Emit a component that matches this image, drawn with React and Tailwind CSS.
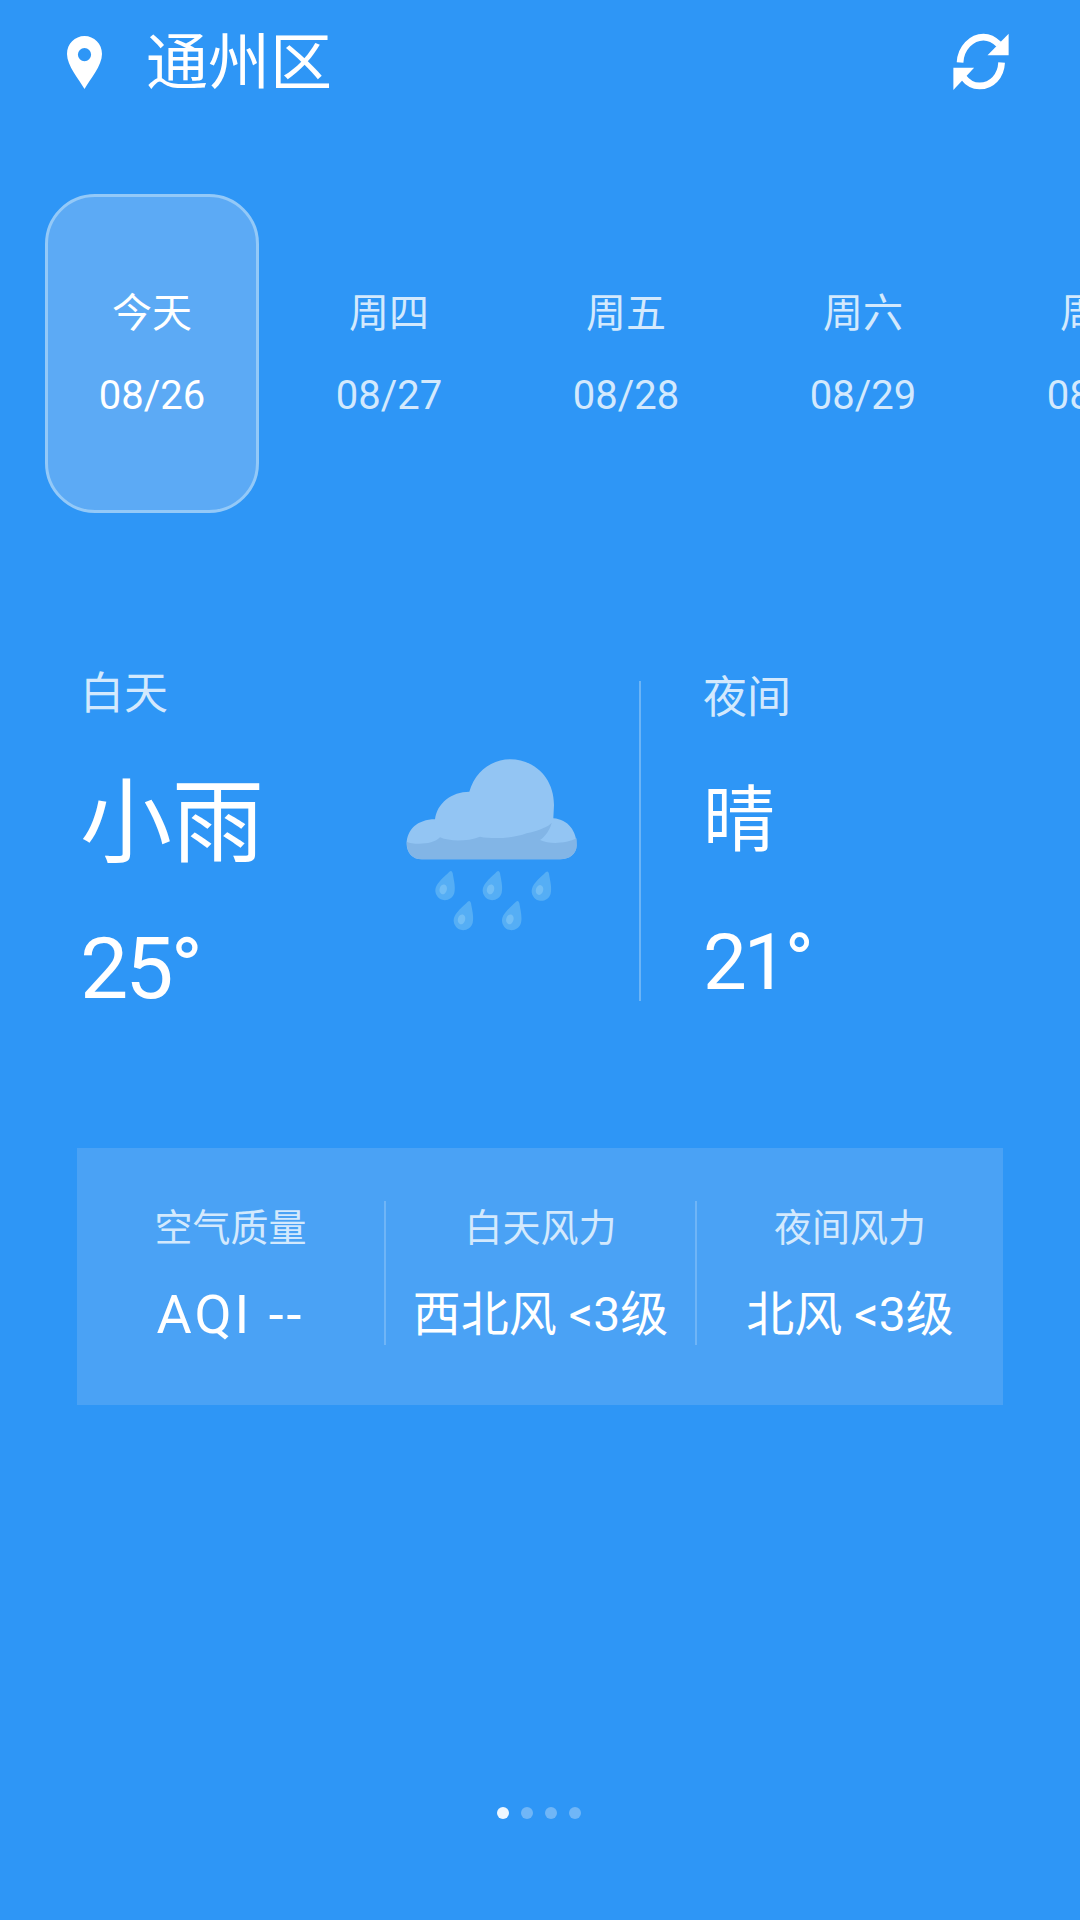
const font = "font-['Roboto','Noto_Sans_CJK_SC',sans-serif]";

const days = [
  { name: "今天", date: "08/26", active: true },
  { name: "周四", date: "08/27" },
  { name: "周五", date: "08/28" },
  { name: "周六", date: "08/29" },
  { name: "周日", date: "08/30" },
];

const stats = [
  { label: "空气质量", value: "AQI --", box: "w-[307px]", size: "text-[54px] tracking-[3px]" },
  { label: "白天风力", value: "西北风 <3级", box: "w-[311px] border-l-2 border-[#6fb5f7]", size: "text-[48px]" },
  { label: "夜间风力", value: "北风 <3级", box: "w-[308px] border-l-2 border-[#6fb5f7]", size: "text-[48px]" },
];

const drops = [
  [198, 470],
  [340, 470],
  [487, 472],
  [253, 560],
  [398, 560],
];

function Pin() {
  return (
    <svg width="35" height="53" viewBox="0 0 106 160" className="shrink-0">
      <path
        fillRule="evenodd"
        fill="#fff"
        d="M53 0 C82 0 106 24 106 54 C106 90 70 130 53 160 C36 130 0 90 0 54 C0 24 24 0 53 0 Z M53 36 A20 20 0 1 0 53 76 A20 20 0 1 0 53 36 Z"
      />
    </svg>
  );
}

function Refresh() {
  return (
    <svg width="62" height="62" viewBox="60 30 185 185" className="shrink-0">
      <path d="M90 124 C92 80 125 48 160 48 C178 48 192 56 206 70" fill="none" stroke="#fff" strokeWidth="20" />
      <path d="M235 38 L235 102 L172 102 Z" fill="#fff" />
      <path d="M214 124 C212 165 185 194 148 194 C128 194 112 184 100 168" fill="none" stroke="#fff" strokeWidth="20" />
      <path d="M70 140 L132 140 L70 206 Z" fill="#fff" />
    </svg>
  );
}

function RainCloud() {
  return (
    <svg width="240" height="220" viewBox="0 0 720 660" className="shrink-0">
      <path
        d="M125 388 C98 388 80 368 80 342 C80 300 112 268 165 268 C170 220 215 185 268 185 C285 125 335 88 390 88 C465 88 522 145 522 225 L520 265 C565 268 590 305 590 345 C590 372 568 388 540 388 Z"
        fill="#93c5f3"
      />
      <path
        d="M80 335 C100 345 160 345 180 322 C210 335 260 335 300 320 C340 328 400 325 440 310 C480 300 505 290 515 278 C510 300 495 320 480 330 C510 345 560 340 590 325 L590 345 C590 372 568 388 540 388 L125 388 C98 388 80 368 80 335 Z"
        fill="#82b5e6"
      />
      {drops.map(([x, y]) => (
        <g key={x} transform={`translate(${x} ${y}) rotate(15)`}>
          <path d="M-2 -46 C2 -52 6 -50 9 -44 C16 -28 29 -6 29 12 C29 28 15 41 0 41 C-15 41 -29 28 -29 12 C-29 -6 -12 -28 -2 -46 Z" fill="#55aef5" />
          <ellipse cx="-6" cy="10" rx="11" ry="15" fill="#72bef6" />
        </g>
      ))}
    </svg>
  );
}

export default function App() {
  return (
    <div className={`${font} w-[1080px] h-[1920px] bg-[#2e96f6] text-white flex flex-col overflow-hidden`}>

      {/* ================= HEADER ================= */}
      <div className="flex items-center justify-between h-[124px] pl-[67px] pr-[68px]">
        <div className="flex items-center gap-[44px]">
          <Pin />
          <span className="text-[62px] leading-none mt-[3px]">通州区</span>
        </div>
        <Refresh />
      </div>

      {/* ================= DAYS ================= */}
      <div className="flex gap-[23px] pl-[45px] mt-[70px]">
        {days.map((d) => (
          <div
            key={d.date}
            className={`w-[214px] h-[319px] shrink-0 rounded-[50px] flex flex-col items-center justify-center gap-[36px] ${
              d.active ? "bg-[#5caaf5] border-[3px] border-[#93c9f8] text-white" : "text-[#d3e9fd]"
            }`}
          >
            <span className="text-[40px] leading-[48px]">{d.name}</span>
            <span className="text-[40px] leading-[44px]">{d.date}</span>
          </div>
        ))}
      </div>

      {/* ================= DAY / NIGHT ================= */}
      <div className="flex mt-[168px] pl-[80px] h-[322px]">
        <div className="w-[559px] flex">
          <div className="flex flex-col w-[300px]">
            <span className="text-[44px] leading-[44px] text-[#d3e9fd] -mt-[9px]">白天</span>
            <span className="text-[92px] leading-[92px] mt-[62px]">小雨</span>
            <span className="text-[86px] leading-[90px] tracking-[-3px] mt-[54px]">25°</span>
          </div>
          <div className="pt-[49px]">
            <RainCloud />
          </div>
        </div>
        <div className="w-[2px] h-[320px] bg-[#6bb4f6]" />
        <div className="flex flex-col pl-[62px]">
          <span className="text-[44px] leading-[44px] text-[#d3e9fd] -mt-[5px]">夜间</span>
          <span className="text-[72px] leading-[80px] mt-[61px]">晴</span>
          <span className="text-[78px] leading-[90px] tracking-[-3px] mt-[57px]">21°</span>
        </div>
      </div>

      {/* ================= STATS ================= */}
      <div className="flex items-center mt-[145px] ml-[77px] w-[926px] h-[257px] pb-[8px] bg-[#4aa2f5]">
        {stats.map((s) => (
          <div key={s.label} className={`${s.box} h-[144px] flex flex-col items-center justify-between shrink-0`}>
            <span className="text-[38px] leading-[54px] text-[#d3e9fd]">{s.label}</span>
            <span className={`${s.size} leading-[60px] whitespace-nowrap`}>{s.value}</span>
          </div>
        ))}
      </div>

      {/* ================= PAGE DOTS ================= */}
      <div className="flex justify-center gap-[12px] mt-[402px] pr-[2px]">
        <div className="w-[12px] h-[12px] rounded-full bg-[#eef7ff]" />
        <div className="w-[12px] h-[12px] rounded-full bg-[#70b6f7]" />
        <div className="w-[12px] h-[12px] rounded-full bg-[#70b6f7]" />
        <div className="w-[12px] h-[12px] rounded-full bg-[#70b6f7]" />
      </div>
    </div>
  );
}
